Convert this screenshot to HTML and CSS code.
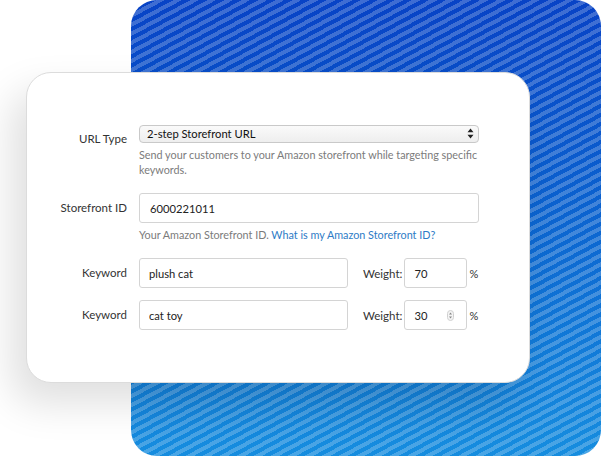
FILE: index.html
```html
<!DOCTYPE html>
<html>
<head>
<meta charset="utf-8">
<link rel="stylesheet" href="styles.css">
</head>
<body>
<div class="stage">
  <div class="backdrop"></div>
  <div class="card">
    <form class="form">
      <label class="lbl lbl-select">URL Type</label>
      <div class="field field-select">
        <div class="select-wrap">
          <select class="select">
            <option>2-step Storefront URL</option>
          </select>
          <svg class="select-arrows" width="7" height="11" viewBox="0 0 7 11"><path d="M3.5 0.5 L6.5 4.3 H0.5 Z M3.5 10.5 L6.5 6.7 H0.5 Z" fill="#222"/></svg>
        </div>
        <p class="help">Send your customers to your Amazon storefront while targeting specific keywords.</p>
      </div>

      <label class="lbl lbl-input">Storefront ID</label>
      <div class="field field-id">
        <input class="input input-full" type="text" value="6000221011">
        <p class="help">Your Amazon Storefront ID. <a class="link" href="#">What is my Amazon Storefront ID?</a></p>
      </div>

      <label class="lbl lbl-input">Keyword</label>
      <div class="field kw-row">
        <input class="input input-kw" type="text" value="plush cat">
        <span class="weight-lbl">Weight:</span>
        <span class="num-wrap"><input class="input input-num" type="text" value="70"></span>
        <span class="pct">%</span>
      </div>

      <label class="lbl lbl-input">Keyword</label>
      <div class="field kw-row">
        <input class="input input-kw" type="text" value="cat toy">
        <span class="weight-lbl">Weight:</span>
        <span class="num-wrap"><input class="input input-num" type="text" value="30">
          <svg class="spin" width="7" height="11" viewBox="0 0 7 11"><rect x="0.5" y="0.5" width="6" height="10" rx="3" fill="#f4f4f4" stroke="#d0d0d0"/><path d="M3.5 2.5 L5 4.5 H2 Z M3.5 8.5 L5 6.5 H2 Z" fill="#888"/></svg>
        </span>
        <span class="pct">%</span>
      </div>
    </form>
  </div>
</div>
</body>
</html>
```

FILE: styles.css
```css
* { box-sizing: border-box; }
html, body { margin: 0; padding: 0; background: #fff; }
body { font-family: Lato, "Open Sans", "Liberation Sans", sans-serif; }

.stage {
  position: relative;
  width: 601px;
  height: 456px;
  overflow: hidden;
  padding-top: 72px;
  padding-left: 26px;
}

.backdrop {
  position: absolute;
  left: 131px;
  top: 0;
  width: 470px;
  height: 456px;
  border-radius: 26px;
  background:
    repeating-linear-gradient(152deg, rgba(255,255,255,0) 0 4px, rgba(255,255,255,0.22) 4px 8px),
    linear-gradient(180deg, #0843c6 0%, #0b62cf 45%, #168ddf 100%);
}

.card {
  position: relative;
  width: 504px;
  height: 311px;
  background: #fff;
  border: 1px solid #dcdcdc;
  border-radius: 25px;
  box-shadow: -14px 20px 40px rgba(0,0,0,0.13);
  padding-top: 52px;
}

.form {
  display: grid;
  grid-template-columns: 100px 340px;
  column-gap: 12px;
  margin: 0;
}

.lbl {
  text-align: right;
  font-size: 11.5px;
  color: #333;
  line-height: 16px;
}
.lbl-select { padding-top: 6px; }
.lbl-input { padding-top: 7px; }

.field { margin-bottom: 12px; }
.field-select { margin-bottom: 16px; }
.field-id { margin-bottom: 16px; }

.select-wrap { position: relative; height: 18px; }
.select {
  appearance: none;
  -webkit-appearance: none;
  display: block;
  width: 340px;
  height: 18px;
  margin: 0;
  padding: 0 0 0 7px;
  font-family: inherit;
  font-size: 11.2px;
  color: #111;
  border: 1px solid #c9c9c9;
  border-radius: 4px;
  background: linear-gradient(#fafafa, #eeeeee);
  line-height: 16px;
}
.select-arrows { position: absolute; right: 5px; top: 3px; }

.help {
  margin: 4px 0 0;
  font-size: 10.8px;
  line-height: 15px;
  color: #7b7b7b;
}
.link { color: #2d7bc6; text-decoration: none; }

.input {
  display: block;
  height: 30px;
  margin: 0;
  padding: 0 0 0 9px;
  font-family: inherit;
  font-size: 11.2px;
  color: #222;
  border: 1px solid #d4d4d4;
  border-radius: 3px;
  background: #fff;
  outline: none;
}
.input-full { width: 340px; padding-left: 10px; }

.kw-row { display: flex; align-items: center; }
.input-kw { width: 209px; }
.weight-lbl {
  font-size: 11.5px;
  color: #333;
  margin-left: 15px;
  margin-right: 2px;
}
.num-wrap { position: relative; display: inline-block; }
.input-num { width: 63px; }
.spin { position: absolute; left: 43px; top: 10px; }
.pct {
  font-size: 11px;
  color: #333;
  margin-left: 2px;
}
```
